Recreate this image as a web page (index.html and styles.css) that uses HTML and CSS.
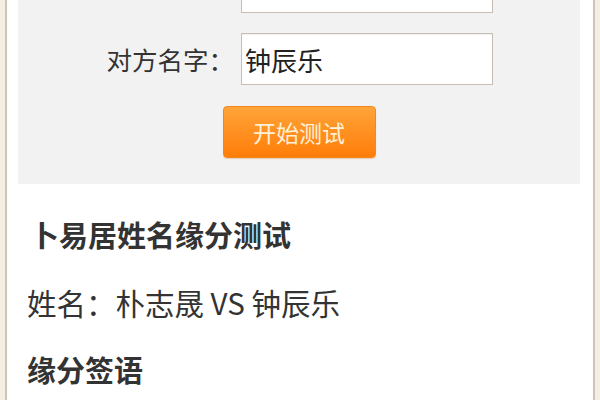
FILE: index.html
```html
<!DOCTYPE html>
<html lang="zh-CN">
<head>
<meta charset="utf-8">
<title>卜易居姓名缘分测试</title>
<link rel="stylesheet" href="styles.css">
</head>
<body>
<div class="page">
  <form class="panel">
    <div class="row row-first">
      <label class="label">你的名字：</label>
      <div class="input">朴志晟</div>
    </div>
    <div class="row">
      <label class="label">对方名字：</label>
      <div class="input">钟辰乐</div>
    </div>
    <div class="actions">
      <button type="button" class="btn">开始测试</button>
    </div>
  </form>
  <section class="result">
    <h2 class="title title-main">卜易居姓名缘分测试</h2>
    <p class="names">姓名：朴志晟 VS 钟辰乐</p>
    <h2 class="title">缘分签语</h2>
  </section>
</div>
</body>
</html>
```
FILE: styles.css
```css
html, body {
  margin: 0;
  padding: 0;
}
body {
  background: #f4efe2;
  font-family: "Noto Sans CJK SC", "Noto Sans", sans-serif;
  color: #333;
  overflow: hidden;
}
.page {
  margin: -62px 5px 0 5px;
  background: #fff;
  border-left: 2px solid #cfc4b8;
  border-right: 2px solid #cfc4b8;
  padding: 0 13px 40px 11px;
  min-height: 520px;
}
.panel {
  background: #f2f2f2;
  padding: 23px 0 26px 0;
  display: flex;
  flex-direction: column;
  gap: 20px;
}
.row {
  display: flex;
  align-items: center;
}
.row-first {
  align-items: flex-start;
}
.row-first .label {
  padding-top: 8px;
}
.row-first .input {
  align-items: flex-start;
  padding-top: 2px;
}
.label {
  width: 216px;
  margin-right: 7px;
  text-align: right;
  font-size: 25.5px;
  line-height: 1;
  color: #333;
}
.input {
  box-sizing: border-box;
  width: 252px;
  height: 52px;
  background: #fff;
  border: 1px solid #c6bdb3;
  box-shadow: inset 0 1px 1px rgba(0,0,0,0.06);
  padding-left: 3px;
  display: flex;
  align-items: center;
  font-size: 26px;
  color: #222;
}
.actions {
  display: flex;
  justify-content: center;
  margin-top: 1px;
}
.btn {
  box-sizing: border-box;
  width: 153px;
  height: 52px;
  border: 1px solid #f3891a;
  border-radius: 4px;
  background: linear-gradient(#ffa43a, #ff7d08);
  color: #fff1d6;
  font-family: "Noto Sans CJK SC", sans-serif;
  font-size: 23px;
  padding: 0;
  box-shadow: 0 1px 1px rgba(200,100,0,0.25);
}
.result {
  padding: 0 9px;
}
.title {
  margin: 0;
  font-size: 29px;
  line-height: 28px;
  font-weight: bold;
  color: #333;
}
.title-main {
  margin-top: 36px;
  padding-left: 3px;
}
.names {
  margin: 40px 0 0 0;
  font-size: 29.5px;
  line-height: 28px;
  color: #333;
}
.names + .title {
  margin-top: 39px;
}
```
